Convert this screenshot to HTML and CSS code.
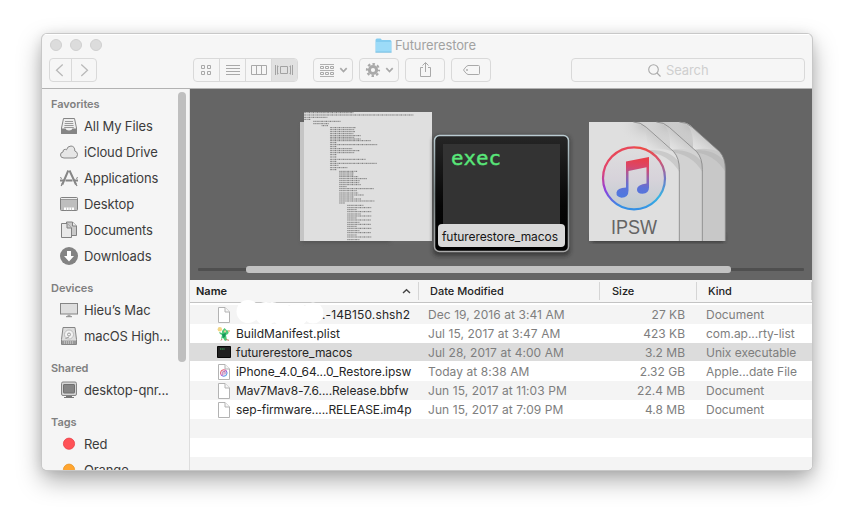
FILE: index.html
```html
<!DOCTYPE html>
<html lang="en">
<head>
<meta charset="utf-8">
<title>Futurerestore</title>
<link rel="stylesheet" href="styles.css">
</head>
<body>
<main class="window">
  <header class="titlebar">
    <div class="title-row">
      <div class="lights"><i></i><i></i><i></i></div>
      <div class="title">
        <svg width="17" height="15" viewBox="0 0 17 15"><path d="M.5 2Q.5.5 2 .5H5.5L7 2H15Q16.5 2 16.5 3.5V14.5H.5Z" fill="#85cdf0"/><path d="M1 4H16V13.5H1Z" fill="#9cdbf8"/><path d="M.5 14.2H16.5" stroke="#7fbfdc" stroke-width=".7"/></svg>
        <span class="title-text">Futurerestore</span>
      </div>
    </div>
    <div class="tools">
      <div class="group nav">
        <span class="seg"><svg width="24" height="22" viewBox="0 0 24 22"><path d="M12.700 5.500L6.500 11.200L12.700 17" stroke="#b9b9b9" stroke-width="1.300" fill="none"/></svg></span>
        <span class="seg"><svg width="24" height="22" viewBox="0 0 24 22"><path d="M9.300 5.500L15.500 11.200L9.300 17" stroke="#b9b9b9" stroke-width="1.300" fill="none"/></svg></span>
      </div>
      <div class="group views">
        <span class="seg"><svg width="25" height="22" viewBox="0 0 25 22" fill="none" stroke="#a9a9a9"><path d="M7.500 6.500h3v3h-3zM13.500 6.500h3v3h-3zM7.500 12.500h3v3h-3zM13.500 12.500h3v3h-3z"/></svg></span>
        <span class="seg"><svg width="25" height="22" viewBox="0 0 25 22" stroke="#a9a9a9"><path d="M6 6.500h14M6 9.500h14M6 12.500h14M6 15.500h14"/></svg></span>
        <span class="seg"><svg width="25" height="22" viewBox="0 0 25 22" fill="none" stroke="#a9a9a9"><path d="M5.500 6.500h15v9h-15zM10.500 6.500v9M15.500 6.500v9"/></svg></span>
        <span class="seg active"><svg width="25" height="22" viewBox="0 0 25 22" fill="none" stroke="#a2a2a2"><path d="M8.500 7.500h7v7h-7zM3.500 6v10M5.500 6.500v9M18.500 6.500v9M20.500 6v10M5.500 7.500h1M5.500 14.500h1M17.500 7.500h1M17.500 14.500h1"/></svg></span>
      </div>
      <div class="group button"><svg width="38" height="22" viewBox="0 0 38 22" fill="none" stroke="#a9a9a9"><path d="M6 5.500h14M6 11.500h14M6 17.500h14" opacity=".9"/><path d="M6.500 7.500h3v2h-3zM11.500 7.500h3v2h-3zM16.500 7.500h3v2h-3zM6.500 13.500h3v2h-3zM11.500 13.500h3v2h-3zM16.500 13.500h3v2h-3z"/><path d="M26.300 9.200L29.500 12.500L32.700 9.200" stroke-width="1.700"/></svg></div>
      <div class="group button"><svg width="38" height="22" viewBox="0 0 38 22" fill="none" stroke="#a9a9a9"><circle cx="13" cy="11" r="3.600" stroke-width="3"/><circle cx="13" cy="11" r="6" stroke-width="2.200" stroke-dasharray="2.500 2.212" stroke-dashoffset="1.25"/><path d="M26.300 9.200L29.500 12.500L32.700 9.200" stroke-width="1.700"/></svg></div>
      <div class="group button"><svg width="38" height="22" viewBox="0 0 38 22" fill="none" stroke="#a9a9a9"><path d="M17 8.500H14.500V17.500H24.500V8.500H22M19.500 13V3.800M16.500 6.500L19.500 3.500L22.500 6.500"/></svg></div>
      <div class="group button"><svg width="38" height="22" viewBox="0 0 38 22" fill="none" stroke="#a9a9a9"><path d="M16 6.500H26.500Q27.500 6.500 27.500 7.500V14.500Q27.500 15.500 26.500 15.500H16Q14.500 15.500 11.500 11Q14.500 6.500 16 6.500Z"/><circle cx="15" cy="11" r=".6"/></svg></div>
      <div class="group search">
        <svg width="13" height="13" viewBox="0 0 13 13" fill="none" stroke="#a9a9a9" stroke-width="1.100"><circle cx="5.500" cy="5.500" r="4.800"/><path d="M9 9L12.500 12.500"/></svg>
        <span>Search</span>
      </div>
    </div>
  </header>

  <div class="body">
    <aside class="sidebar">
      <h2 class="first">Favorites</h2>
      <ul>
        <li><svg viewBox="0 0 18 18"><path d="M3.500 1.500H14.500L16.500 11V16.500H1.500V11Z" fill="#eee" stroke="#858585"/><path d="M5 4.500h8M4.700 6.500h8.600M4.400 8.500h9.200M4.200 10.500h9.600" stroke="#999"/><path d="M1 11.500H5.500Q6 13.500 9 13.500T12.500 11.500H17V16Q17 17 16 17H2Q1 17 1 16Z" fill="#858585"/></svg><span>All My Files</span></li>
        <li><svg viewBox="0 0 18 18"><path d="M4 15Q.5 15 .5 12Q.5 9.200 3 9Q2.800 6.500 5 6.300Q5.700 6.200 6.500 6.800Q7.500 3 11 3Q15 3.300 14.800 8Q17.500 8.700 17.500 11.500Q17.500 15 14 15Z" fill="#e6e6e6" stroke="#888"/></svg><span>iCloud Drive</span></li>
        <li><svg viewBox="0 0 18 18" fill="none" stroke="#868686"><path d="M8.300 1.500L2.300 15.500M9.500 1.500L16 15.500" stroke-width="2"/><path d="M2.500 14L1.200 17M15.300 14L17 17" stroke-width="1.300"/><path d="M0 11.500H4M5.500 11.500H12.500M14 11.500H18" stroke-width="2"/><path d="M0 8.500L2 9.500M18 8.500L16 9.500"/></svg><span>Applications</span></li>
        <li><svg viewBox="0 0 18 18"><rect x=".5" y="2.500" width="17" height="13" rx="1" fill="#bebebe" stroke="#818181"/><path d="M1 3.500h16" stroke="#eee"/><path d="M1 4.500h16" stroke="#999"/><path d="M4 12.500h10v2.500H4z" fill="#fff"/><path d="M6.500 12.500v3M9 12.500v3M11.500 12.500v3" stroke="#aaa" stroke-width=".6"/></svg><span>Desktop</span></li>
        <li><svg viewBox="0 0 18 18" stroke="#818181"><path d="M6.500 1H12.500L16.500 5V14.500H6.500Z" fill="#c9c9c9"/><path d="M12.500 1V5H16.500" fill="#eee"/><path d="M1.500 2.500H7L11.500 7V16.500H1.500Z" fill="#e9e9e9"/><path d="M7 2.500V7H11.500" fill="#ccc"/></svg><span>Documents</span></li>
        <li><svg viewBox="0 0 18 18"><circle cx="9" cy="9" r="9" fill="#838383"/><path d="M7 4H11V9H14L9 14.500L4 9H7Z" fill="#fff"/></svg><span>Downloads</span></li>
      </ul>
      <h2>Devices</h2>
      <ul>
        <li><svg viewBox="0 0 18 18"><rect x=".5" y="2.500" width="17" height="10.500" fill="#dedede" stroke="#858585"/><path d="M7.500 13.500h3v2h-3z" fill="#aaa"/><path d="M6 15.700h6" stroke="#888"/></svg><span>Hieu’s Mac</span></li>
        <li><svg viewBox="0 0 18 18"><path d="M3 .5H15L16.500 12.500V17.500H1.500V12.500Z" fill="#ddd" stroke="#858585"/><path d="M2 13.500h14v3.500H2z" fill="#999"/><path d="M4.500 14v3M6.500 14v3M8.500 14v3M10.500 14v3M12.500 14v3" stroke="#ccc" stroke-width=".7"/><circle cx="9" cy="7.500" r="4.500" fill="#f2f2f2" stroke="#aaa" stroke-width=".7"/><circle cx="9" cy="7.500" r="1.500" fill="none" stroke="#888" stroke-width=".8"/><path d="M5.500 11.500L9 10" stroke="#999"/></svg><span>macOS High...</span></li>
      </ul>
      <h2>Shared</h2>
      <ul>
        <li><svg viewBox="0 0 18 18"><rect x="1.500" y="1" width="15" height="13.500" rx="1.500" fill="#d5d5d5" stroke="#858585"/><rect x="3.500" y="3.500" width="11" height="8.500" rx=".5" fill="#858585" stroke="#707070"/><path d="M6 15h6v1H6zM4 16h10v1H4z" fill="#777"/></svg><span>desktop-qnr...</span></li>
      </ul>
      <h2>Tags</h2>
      <ul>
        <li><svg viewBox="0 0 18 18"><circle cx="9" cy="8.700" r="5.600" fill="#ff5257" stroke="#ea4047" stroke-width=".8"/></svg><span>Red</span></li>
        <li><svg viewBox="0 0 18 18"><circle cx="9" cy="8.700" r="5.600" fill="#ffa530" stroke="#e99523" stroke-width=".8"/></svg><span>Orange</span></li>
      </ul>
      <div class="side-scroll"></div>
    </aside>

    <section class="content">
      <div class="coverflow">
        <svg class="covers" width="622" height="191" viewBox="190 89 622 191">
          <defs>
            <linearGradient id="ring" x1="0" y1="0" x2="1" y2="1"><stop offset=".08" stop-color="#eb464e"/><stop offset=".28" stop-color="#e04468"/><stop offset=".46" stop-color="#b43fc0"/><stop offset=".56" stop-color="#8048dd"/><stop offset=".74" stop-color="#4577e3"/><stop offset=".94" stop-color="#36bce4"/></linearGradient>
            <linearGradient id="ringv" x1=".1" y1=".05" x2=".35" y2="1"><stop offset="0" stop-color="#ee4b46"/><stop offset=".3" stop-color="#e04372"/><stop offset=".62" stop-color="#8f40df"/><stop offset="1" stop-color="#348fe4"/></linearGradient>
            <linearGradient id="ringr" x1="0" y1="0" x2="0" y2="1"><stop offset="0" stop-color="#ee4b46"/><stop offset=".22" stop-color="#d45570"/><stop offset=".5" stop-color="#7278c5"/><stop offset=".8" stop-color="#36b5e3"/><stop offset="1" stop-color="#348fe4"/></linearGradient>
            <linearGradient id="note" gradientUnits="userSpaceOnUse" x1="638" y1="157" x2="634" y2="197"><stop offset=".05" stop-color="#e8404c"/><stop offset=".25" stop-color="#d9476a"/><stop offset=".5" stop-color="#9960a9"/><stop offset=".75" stop-color="#5d72d8"/><stop offset="1" stop-color="#4f78df"/></linearGradient>
            <linearGradient id="disc" x1="0" y1="0" x2="0" y2="1"><stop offset="0" stop-color="#dedede"/><stop offset=".5" stop-color="#d7d3da"/><stop offset="1" stop-color="#c0cbd0"/></linearGradient>
            <linearGradient id="curl" x1="0" y1="1" x2=".6" y2=".35"><stop offset="0" stop-color="#eee"/><stop offset=".5" stop-color="#dcdcdc"/><stop offset="1" stop-color="#c4c4c4"/></linearGradient>
            <linearGradient id="casing" x1="0" y1="0" x2="0" y2="1"><stop offset="0" stop-color="#262626"/><stop offset=".6" stop-color="#060606"/><stop offset="1" stop-color="#000"/></linearGradient>
            <linearGradient id="rim" x1="0" y1="0" x2="0" y2="1"><stop offset="0" stop-color="#bacbd1"/><stop offset=".5" stop-color="#7d898a"/><stop offset="1" stop-color="#aaa"/></linearGradient>
            <radialGradient id="fade" cx="1" cy=".1" r=".75"><stop offset="0" stop-color="#b4b4b4" stop-opacity=".8"/><stop offset=".4" stop-color="#c9c9c9" stop-opacity=".5"/><stop offset="1" stop-color="#ddd" stop-opacity="0"/></radialGradient>
            <filter id="soft" x="-20%" y="-20%" width="140%" height="140%"><feGaussianBlur stdDeviation="2"/></filter>
            <g id="page">
              <path d="M0 0H133Q155 0 172 16L254 89Q271 108 271 142V357H0Z"/>
              <path d="M60 0H133Q160 2 173 27V82H60Z" fill="url(#fade)"/>
              <path d="M174 84Q240 80 270 120Q271 130 271 150Q240 96 174 90Z" fill="#aaa" opacity=".4"/>
              <path d="M143 1Q177 12 174 83Q220 75 250 88Q200 45 172 16Q160 3 143 1Z" fill="url(#curl)"/>
              <path d="M133 0Q155 0 172 16L254 89Q271 108 271 142V357" fill="none" stroke="#858585" stroke-width="2.500"/>
            </g>
          </defs>
          <path d="M302 124H390V242H302Z" fill="#3f3f3f" filter="url(#soft)" opacity=".6"/>
          <path d="M300 122H432V241H300Z" fill="#c5c5c5"/>
          <path d="M304 112H432V241H304Z" fill="#dfdfdf"/>
          <g transform="translate(290 100) scale(.33333)" stroke="#444" stroke-width="3" stroke-dasharray="2.200 1.300 3.800 1.700 1.500 1" opacity=".72">
            <path d="M42 38H190M42 45H370M42 52H112M42 58H62M70 64H152M70 71H117M95 77H115"/>
            <path d="M120 83H198M120 89H193M120 95H195M120 101H190M120 107H213M120 112H193M120 117H213M120 122H242M120 128H140M120 134H262M120 140H140M120 146H187M120 152H208M120 158H193M120 164H140M120 171H140M120 178H228M120 184H140M120 190H260M120 196H145M120 203H172M120 209H140"/>
            <path d="M148 214H202M148 219H192M148 225H190M148 230H205M148 236H232M148 242H210M148 248H208M148 254H212M148 260H170M148 266H252M148 272H200M148 279H205M148 285H222M148 291H192M148 297H213M148 303H253M148 309H165"/>
            <path d="M172 316H220M172 323H245M172 329H200M172 335H245M172 342H212M172 348H245M172 354H200M172 360H243M172 367H208M172 373H243M172 379H200M172 385H245M172 392H208M172 398H243M172 405H200M172 411H245M172 419H208"/>
          </g>
          <rect x="433" y="136" width="137" height="120" rx="5" fill="#222" opacity=".6" filter="url(#soft)"/>
          <rect x="434.500" y="135.500" width="134" height="116" rx="5" fill="url(#casing)" stroke="url(#rim)" stroke-width="1.500"/>
          <path d="M443 144H560V230H443Z" fill="#333"/>
          <text class="exec" x="451" y="165" textLength="50" lengthAdjust="spacingAndGlyphs">exec</text>
          <rect x="438" y="224" width="127" height="23" rx="4" fill="#d8d8d8"/>
          <text class="cover-name" x="442" y="241" textLength="116">futurerestore_macos</text>
          <rect x="592" y="234" width="132" height="8" fill="#333" filter="url(#soft)"/>
          <use href="#page" fill="#c8c8c8" transform="translate(635 122) scale(.33333)"/>
          <use href="#page" fill="#d2d2d2" transform="translate(612 122) scale(.33333)"/>
          <use href="#page" fill="#dfdfdf" transform="translate(589 122) scale(.33333)"/>
          <circle cx="634" cy="178.300" r="31" fill="url(#disc)"/>
          <path d="M634 147.300A31 31 0 0 0 634 209.300" fill="none" stroke="url(#ringv)" stroke-width="2.200"/>
          <path d="M634 147.300A31 31 0 0 1 634 209.300" fill="none" stroke="url(#ringr)" stroke-width="2.200"/>
          <path d="M626 161.500L649 157V187.500Q649 193.500 642.500 193.800Q636.500 193.500 637 189Q637.500 184.500 646.500 183.500V167.300L628.500 171V190.500Q628.500 197.700 621.500 197.700Q616 197 616.500 192.500Q617 188 626 187.500Z" fill="url(#note)"/>
          <text class="ipsw" x="611" y="234" textLength="46" lengthAdjust="spacingAndGlyphs">IPSW</text>
        </svg>
        <div class="flow-track"><div class="flow-thumb"></div></div>
      </div>

      <div class="list">
        <div class="row head">
          <span class="h-name">Name <svg width="9" height="7" viewBox="0 0 9 7"><path d="M1 5L4.500 1.800L8 5" fill="none" stroke="#444" stroke-width="1.400"/></svg></span>
          <span class="h-date">Date Modified</span><span class="h-size">Size</span><span class="h-kind">Kind</span>
        </div>
        <div class="rows">
          <div class="row"><span class="name"><svg viewBox="0 0 14 16"><use href="#file"/></svg><b class="masked">.-14B150.shsh2</b></span><span class="date">Dec 19, 2016 at 3:41 AM</span><span class="size">27 KB</span><span class="kind">Document</span></div>
          <div class="row"><span class="name"><svg viewBox="0 0 14 16"><path d="M5 5L7.500 2L10 4.500L12.500 4L11 8L9 9L10 14L8 15L6 12L4 13L5 9L3 8L2 6L5 7Z" fill="#4fca78"/><path d="M5 8L9 7L8 11L6 12Z" fill="#15975a"/><circle cx="2.800" cy="3.200" r="2.200" fill="#f2d685"/><path d="M7 4.500h2v1.800H7zM11 4h1.800v2H11z" fill="#e8c89c"/><path d="M9 13.500l3 .8M5 13l-1 1.500" stroke="#bd8262"/></svg><b>BuildManifest.plist</b></span><span class="date">Jul 15, 2017 at 3:47 AM</span><span class="size">423 KB</span><span class="kind">com.ap...rty-list</span></div>
          <div class="row selected"><span class="name"><svg viewBox="0 0 14 16"><path d="M.5 2.500h13v11H.5z" fill="#202020" stroke="#080808"/><path d="M3 5h5" stroke="#39a858" stroke-dasharray="1.200 .5"/></svg><b class="tight">futurerestore_macos</b></span><span class="date">Jul 28, 2017 at 4:00 AM</span><span class="size">3.2 MB</span><span class="kind">Unix executable</span></div>
          <div class="row"><span class="name"><svg viewBox="0 0 14 16"><use href="#file"/><circle cx="6.800" cy="9" r="3.300" fill="#eee5f1" stroke="url(#ring)" stroke-width=".9"/><path d="M5.800 11V7.800L8 7.300V10.300" fill="none" stroke="#b0609f" stroke-width=".8"/></svg><b class="tight">iPhone_4.0_64...0_Restore.ipsw</b></span><span class="date">Today at 8:38 AM</span><span class="size">2.32 GB</span><span class="kind">Apple...date File</span></div>
          <div class="row"><span class="name"><svg viewBox="0 0 14 16"><use href="#file"/></svg><b class="tight">Mav7Mav8-7.6....Release.bbfw</b></span><span class="date">Jun 15, 2017 at 11:03 PM</span><span class="size">22.4 MB</span><span class="kind">Document</span></div>
          <div class="row"><span class="name"><svg viewBox="0 0 14 16"><use href="#file"/></svg><b class="tighter">sep-firmware.....RELEASE.im4p</b></span><span class="date">Jun 15, 2017 at 7:09 PM</span><span class="size">4.8 MB</span><span class="kind">Document</span></div>
          <div class="row"></div><div class="row"></div><div class="row"></div>
        </div>
        <svg class="scribble" width="92" height="27" viewBox="0 0 92 27" fill="#fff"><defs><g id="file"><path d="M1.500.5H8L12.500 5V15.500H1.500Z" fill="#fff" stroke="#b3b3b3"/><path d="M8 .5V5H12.500" fill="#f7f7f7" stroke="#b3b3b3"/></g></defs><circle cx="13" cy="11.500" r="11.500"/><circle cx="31" cy="13.500" r="11.500"/><circle cx="37" cy="12.500" r="10.500"/><circle cx="48" cy="15" r="11"/><circle cx="62" cy="14.500" r="11.500"/><circle cx="78" cy="13" r="10.500"/></svg>
      </div>
    </section>
  </div>
</main>
</body>
</html>
```
FILE: styles.css
```css
* { box-sizing: border-box; }
html, body { margin: 0; height: 100%; }
body {
  background: #fff;
  overflow: hidden;
  padding: 34px 42px;
  font-family: Inter, "Liberation Sans", sans-serif;
  font-size: 12px;
}
svg { display: block; flex: none; }

.window {
  width: 770px;
  height: 436px;
  display: flex;
  flex-direction: column;
  overflow: hidden;
  border-radius: 5px;
  background: #f6f6f6;
  box-shadow: 0 0 0 1px #c8c8c8, 0 10px 24px rgba(0, 0, 0, .34), 0 1px 12px rgba(0, 0, 0, .1);
}
.titlebar { height: 55px; flex: none; border-bottom: 1px solid #b2b2b2; box-shadow: inset 0 1px #fff; }
.title-row { height: 24px; display: flex; align-items: center; padding: 0 0 2px 8px; }
.lights { display: flex; gap: 8px; width: 325px; }
.lights i { width: 12px; height: 12px; border-radius: 50%; background: #dcdcdc; border: 1px solid #cfcfcf; }
.title { display: flex; align-items: center; gap: 3px; }
.title-text { font-size: 13px; color: #a2a2a2; letter-spacing: -.12px; }

.tools { display: flex; padding: 0 7px; }
.group { height: 24px; border: 1px solid #d9d9d9; border-radius: 4px; display: flex; overflow: hidden; }
.seg + .seg { border-left: 1px solid #d9d9d9; }
.seg.active { background: #e1e1e1; }
.nav { width: 48px; margin-right: 96px; }
.nav .seg { width: 22px; }
.nav .seg + .seg { width: 25px; }
.nav .seg:first-child { width: 21px; overflow: hidden; }
.views { width: 105px; margin-right: 15px; }
.button { width: 40px; margin-right: 6px; }
.search { width: 234px; margin-left: 74px; align-items: center; padding-left: 76px; gap: 5px; font-size: 13px; letter-spacing: -.1px; color: #cfcfcf; }

.body { flex: 1; min-height: 0; display: flex; }
.sidebar { position: relative; width: 148px; flex: none; border-right: 1px solid #ddd; overflow: hidden; background: #f5f5f5; }
.sidebar h2 { margin: 0; height: 28px; padding: 10px 0 0 9px; font-size: 11px; line-height: 18px; font-weight: 600; color: #808080; letter-spacing: -.05px; }
.sidebar h2.first { height: 24px; padding-top: 6px; }
.sidebar ul { list-style: none; margin: 0; padding: 0; }
.sidebar li { height: 26px; display: flex; align-items: center; gap: 6px; padding-left: 18px; font-size: 13px; color: #3c3c3c; white-space: nowrap; letter-spacing: -.12px; }
.sidebar li svg { width: 18px; height: 18px; }
.side-scroll { position: absolute; right: 3px; top: 3px; width: 8px; height: 270px; border-radius: 4px; background: #bfbfbf; }

.content { flex: 1; min-width: 0; display: flex; flex-direction: column; }
.coverflow { position: relative; height: 191px; flex: none; background: #656565; }
.flow-track { position: absolute; left: 8px; right: 8px; bottom: 9px; height: 3px; background: #4f4f4f; border-radius: 1px; }
.flow-thumb { width: 485px; height: 7px; margin: -2px 0 0 48px; border-radius: 3px; background: #c2c2c2; }
.exec { font: 20px "DejaVu Sans Mono", monospace; fill: #59e779; stroke: #59e779; stroke-width: .4px; }
.cover-name { font-size: 12px; fill: #161616; }
.ipsw { font: 20px "Liberation Sans", sans-serif; fill: #646464; }

.list { position: relative; flex: 1; min-height: 0; background: #fff; }
.row { height: 19px; display: grid; grid-template-columns: 229px 181px 97px 115px; align-items: center; white-space: nowrap; color: #7e7e7e; }
.head { height: 23px; border-bottom: 1px solid #c3c3c3; background: #f5f5f5; color: #222; font-size: 11px; font-weight: 500; }
.head > span { height: 18px; display: flex; align-items: center; border-right: 1px solid #d5d5d5; padding-left: 12px; }
.head .h-name { font-weight: 600; padding: 0 7px 0 6px; justify-content: space-between; }
.head .h-date, .head .h-kind { padding-left: 11px; }
.rows { margin-top: 2px; }
.rows .row:nth-child(odd) { background: #f4f4f4; }
.rows .row.selected { background: #dcdcdc; border-bottom: 1px solid #fff; }
.name { display: flex; align-items: center; padding-left: 27px; gap: 5px; }
.name svg { width: 14px; height: 16px; }
.name b { font-weight: 400; color: #262626; }
.name .tight { letter-spacing: -.06px; }
.name .tighter { letter-spacing: -.09px; }
.name .masked { margin-left: 86px; letter-spacing: .12px; }
.date { padding-left: 9px; letter-spacing: .07px; }
.size { text-align: right; padding-right: 12px; }
.kind { padding-left: 9px; letter-spacing: -.03px; }
.scribble { position: absolute; left: 45px; top: 20px; }
```
